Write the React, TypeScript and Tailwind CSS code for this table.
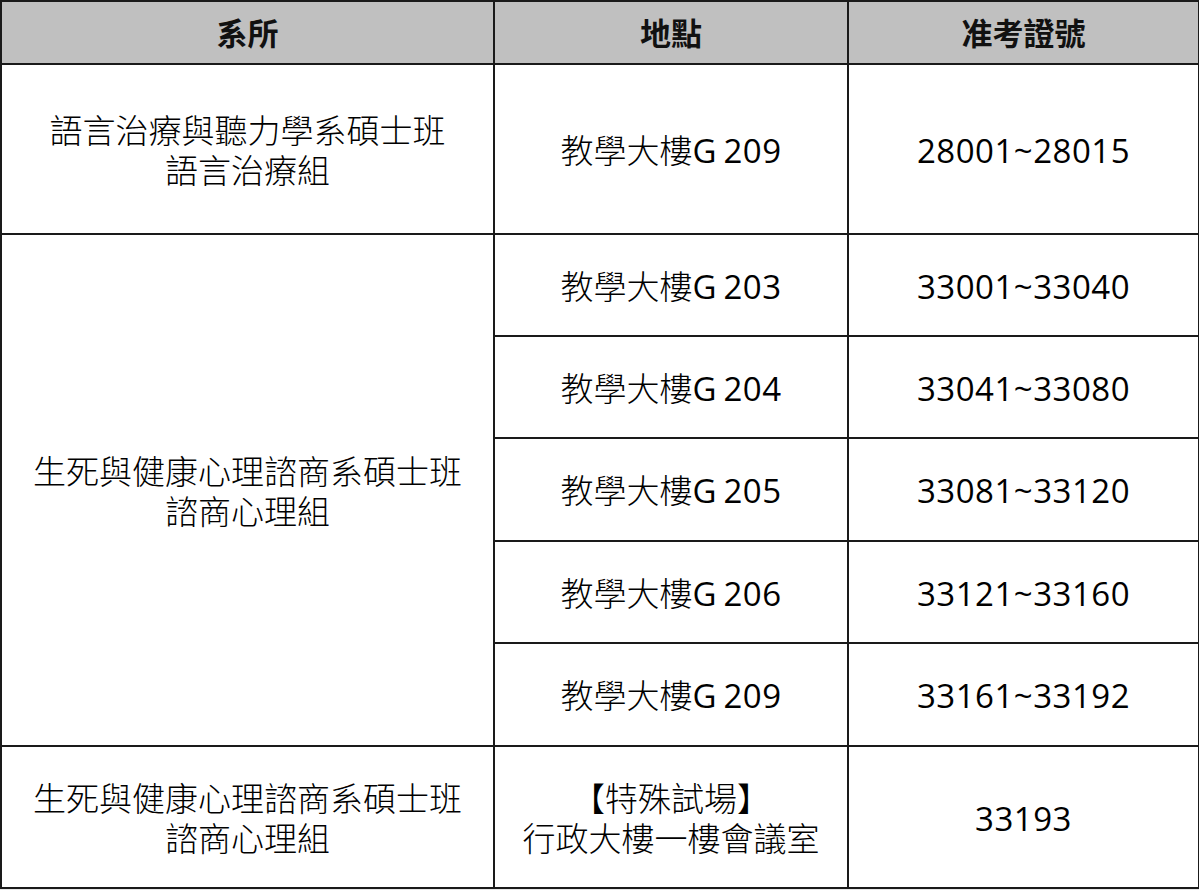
import React from "react";

const font = { fontFamily: '"Open Sans", "Noto Sans CJK TC", sans-serif' };

function Place({ room }: { room: string }) {
  return (
    <>
      教學大樓<span className="font-normal">G</span>
      <span className="ml-[7px] tracking-[0.4px] font-normal">{room}</span>
    </>
  );
}

function Num({ v }: { v: string }) {
  return <span className="tracking-[0.5px] font-normal">{v}</span>;
}

export default function App() {
  const head = "border-2 border-[#1a1a1a] text-center align-middle p-0";
  const cell = "border-2 border-[#1a1a1a] text-center align-middle p-0 pt-[3px]";
  return (
    <div className="w-[1199px] h-[890px] bg-[#e6e6e6]" style={font}>
      <table className="table-fixed border-collapse bg-white text-black text-[33px] font-light leading-[40px] w-[1198px]">
        <colgroup>
          <col className="w-[493px]" />
          <col className="w-[354px]" />
          <col className="w-[351px]" />
        </colgroup>
        <thead>
          <tr className="h-[63px] bg-[#c0c0c0] font-bold text-[31px] text-[#111]">
            <th className={head}>系所</th>
            <th className={head}>地點</th>
            <th className={head}>准考證號</th>
          </tr>
        </thead>
        <tbody>
          <tr className="h-[170px]">
            <td className={cell}>
              語言治療與聽力學系碩士班
              <br />
              語言治療組
            </td>
            <td className={cell}>
              <Place room="209" />
            </td>
            <td className={cell}>
              <Num v="28001~28015" />
            </td>
          </tr>
          <tr className="h-[102px]">
            <td className={cell} rowSpan={5}>
              生死與健康心理諮商系碩士班
              <br />
              諮商心理組
            </td>
            <td className={cell}>
              <Place room="203" />
            </td>
            <td className={cell}>
              <Num v="33001~33040" />
            </td>
          </tr>
          <tr className="h-[102px]">
            <td className={cell}>
              <Place room="204" />
            </td>
            <td className={cell}>
              <Num v="33041~33080" />
            </td>
          </tr>
          <tr className="h-[103px]">
            <td className={cell}>
              <Place room="205" />
            </td>
            <td className={cell}>
              <Num v="33081~33120" />
            </td>
          </tr>
          <tr className="h-[102px]">
            <td className={cell}>
              <Place room="206" />
            </td>
            <td className={cell}>
              <Num v="33121~33160" />
            </td>
          </tr>
          <tr className="h-[103px]">
            <td className={cell}>
              <Place room="209" />
            </td>
            <td className={cell}>
              <Num v="33161~33192" />
            </td>
          </tr>
          <tr className="h-[142px]">
            <td className={cell}>
              生死與健康心理諮商系碩士班
              <br />
              諮商心理組
            </td>
            <td className={cell}>
              【特殊試場】
              <br />
              行政大樓一樓會議室
            </td>
            <td className={cell}>
              <Num v="33193" />
            </td>
          </tr>
        </tbody>
      </table>
    </div>
  );
}
